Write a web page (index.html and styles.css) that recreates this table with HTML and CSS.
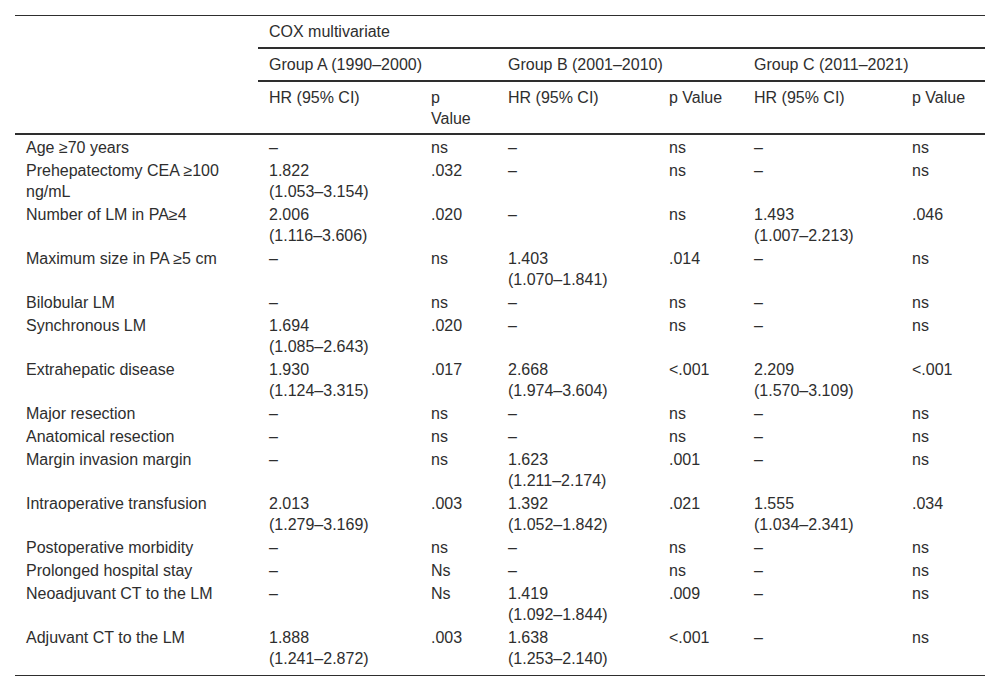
FILE: index.html
```html
<!DOCTYPE html>
<html lang="en">
<head>
<meta charset="utf-8">
<title>COX multivariate</title>
<link rel="stylesheet" href="styles.css">
</head>
<body>
<table class="data">
  <colgroup>
    <col class="c-label">
    <col class="c-hr-a">
    <col class="c-p-a">
    <col class="c-hr-b">
    <col class="c-p-b">
    <col class="c-hr-c">
    <col class="c-p-c">
  </colgroup>
  <thead>
    <tr class="h1">
      <th rowspan="3" class="blank"></th>
      <th colspan="6" class="rule">COX multivariate</th>
    </tr>
    <tr class="h2">
      <th colspan="2" class="rule">Group A (1990–2000)</th>
      <th colspan="2" class="rule">Group B (2001–2010)</th>
      <th colspan="2" class="rule">Group C (2011–2021)</th>
    </tr>
    <tr class="h3">
      <th>HR (95% CI)</th>
      <th>p Value</th>
      <th>HR (95% CI)</th>
      <th>p Value</th>
      <th>HR (95% CI)</th>
      <th>p Value</th>
    </tr>
  </thead>
  <tbody>
    <tr><td>Age ≥70 years</td><td>–</td><td>ns</td><td>–</td><td>ns</td><td>–</td><td>ns</td></tr>
    <tr><td>Prehepatectomy CEA ≥100 ng/mL</td><td>1.822 <span class="ci">(1.053–3.154)</span></td><td>.032</td><td>–</td><td>ns</td><td>–</td><td>ns</td></tr>
    <tr><td>Number of LM in PA≥4</td><td>2.006 <span class="ci">(1.116–3.606)</span></td><td>.020</td><td>–</td><td>ns</td><td>1.493 <span class="ci">(1.007–2.213)</span></td><td>.046</td></tr>
    <tr><td>Maximum size in PA ≥5 cm</td><td>–</td><td>ns</td><td>1.403 <span class="ci">(1.070–1.841)</span></td><td>.014</td><td>–</td><td>ns</td></tr>
    <tr><td>Bilobular LM</td><td>–</td><td>ns</td><td>–</td><td>ns</td><td>–</td><td>ns</td></tr>
    <tr><td>Synchronous LM</td><td>1.694 <span class="ci">(1.085–2.643)</span></td><td>.020</td><td>–</td><td>ns</td><td>–</td><td>ns</td></tr>
    <tr><td>Extrahepatic disease</td><td>1.930 <span class="ci">(1.124–3.315)</span></td><td>.017</td><td>2.668 <span class="ci">(1.974–3.604)</span></td><td>&lt;.001</td><td>2.209 <span class="ci">(1.570–3.109)</span></td><td>&lt;.001</td></tr>
    <tr><td>Major resection</td><td>–</td><td>ns</td><td>–</td><td>ns</td><td>–</td><td>ns</td></tr>
    <tr><td>Anatomical resection</td><td>–</td><td>ns</td><td>–</td><td>ns</td><td>–</td><td>ns</td></tr>
    <tr><td>Margin invasion margin</td><td>–</td><td>ns</td><td>1.623 <span class="ci">(1.211–2.174)</span></td><td>.001</td><td>–</td><td>ns</td></tr>
    <tr><td>Intraoperative transfusion</td><td>2.013 <span class="ci">(1.279–3.169)</span></td><td>.003</td><td>1.392 <span class="ci">(1.052–1.842)</span></td><td>.021</td><td>1.555 <span class="ci">(1.034–2.341)</span></td><td>.034</td></tr>
    <tr><td>Postoperative morbidity</td><td>–</td><td>ns</td><td>–</td><td>ns</td><td>–</td><td>ns</td></tr>
    <tr><td>Prolonged hospital stay</td><td>–</td><td>Ns</td><td>–</td><td>ns</td><td>–</td><td>ns</td></tr>
    <tr><td>Neoadjuvant CT to the LM</td><td>–</td><td>Ns</td><td>1.419 <span class="ci">(1.092–1.844)</span></td><td>.009</td><td>–</td><td>ns</td></tr>
    <tr class="last"><td>Adjuvant CT to the LM</td><td>1.888 <span class="ci">(1.241–2.872)</span></td><td>.003</td><td>1.638 <span class="ci">(1.253–2.140)</span></td><td>&lt;.001</td><td>–</td><td>ns</td></tr>
  </tbody>
</table>
</body>
</html>
```

FILE: styles.css
```css
html, body {
  margin: 0;
  padding: 0;
  background: #ffffff;
}

body {
  padding: 15px 15px 0 15px;
  font-family: "Liberation Sans", Arial, Helvetica, sans-serif;
  font-size: 16px;
  line-height: 21px;
  color: #2e2e2e;
}

.data {
  width: 970px;
  border-collapse: collapse;
  table-layout: fixed;
  border-top: 1px solid #2e2e2e;
  border-bottom: 1px solid #2e2e2e;
}

.c-label { width: 243px; }
.c-hr-a { width: 162px; }
.c-p-a { width: 77px; }
.c-hr-b { width: 161px; }
.c-p-b { width: 85px; }
.c-hr-c { width: 158px; }
.c-p-c { width: 84px; }

.data th,
.data td {
  text-align: left;
  vertical-align: top;
  font-weight: normal;
  padding: 2px 14px 0 11px;
}

.ci {
  white-space: nowrap;
}

.data thead th {
  padding-top: 5px;
  padding-bottom: 5px;
}

.data thead .h3 th {
  padding-bottom: 4px;
}

.data thead .rule {
  border-bottom: 2px solid #2e2e2e;
}

.data thead .h3 th,
.data thead .blank {
  border-bottom: 2px solid #2e2e2e;
}

.data tbody tr.last td {
  padding-bottom: 6px;
}
```
